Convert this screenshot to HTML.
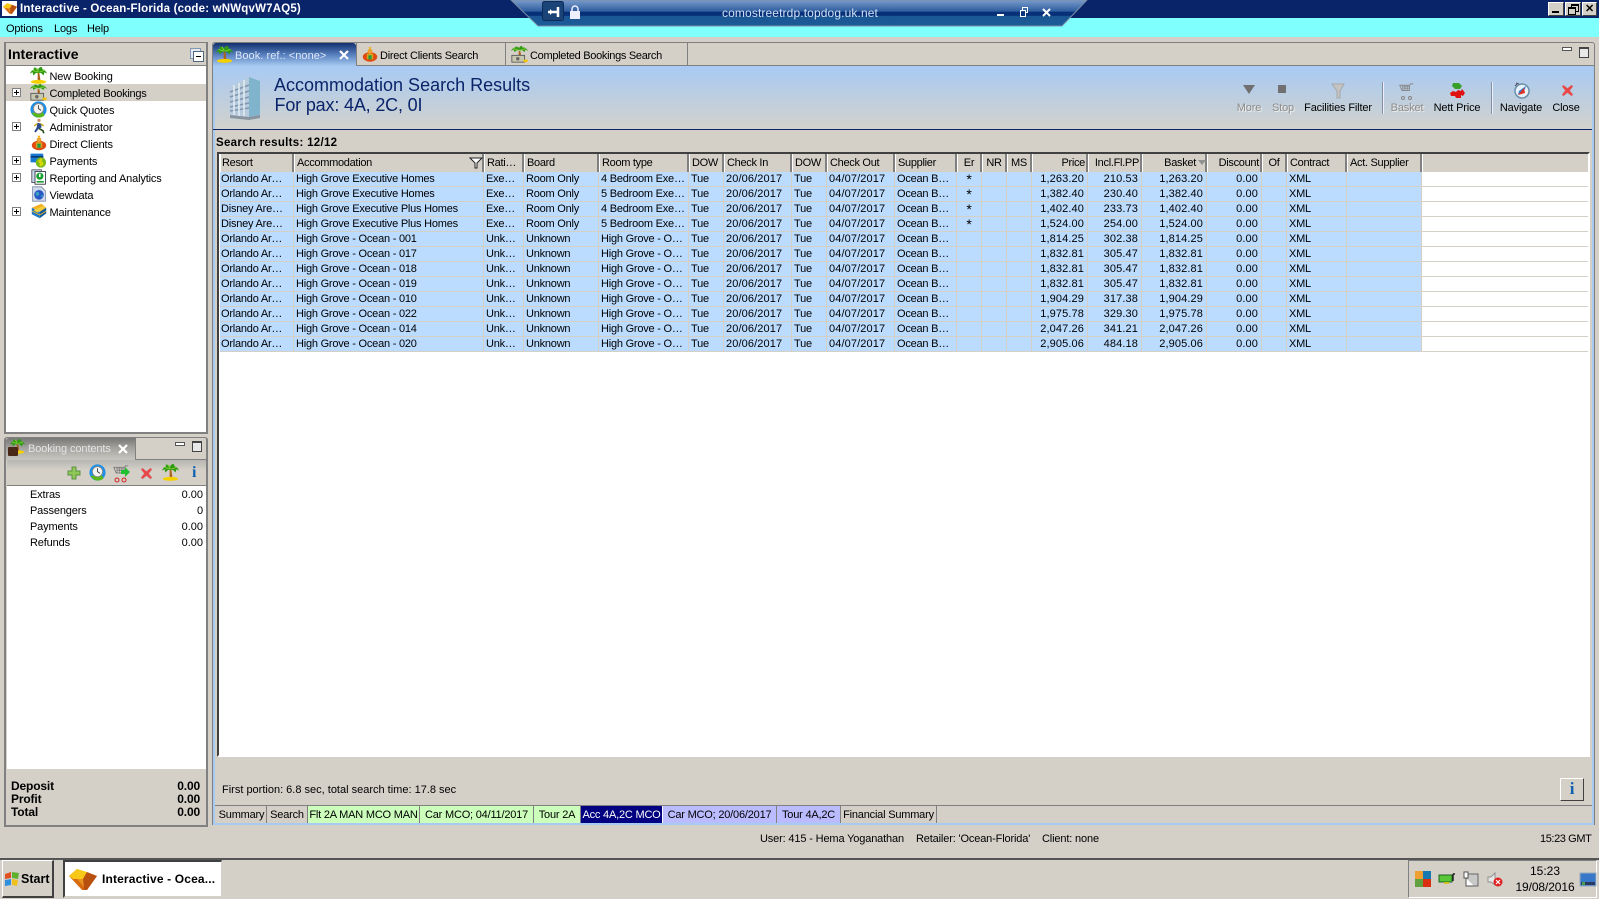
<!DOCTYPE html>
<html><head><meta charset="utf-8"><title>Interactive</title>
<style>
html,body{margin:0;padding:0}
body{width:1599px;height:899px;position:relative;overflow:hidden;background:#d4d0c8;font:11px "Liberation Sans",Arial,sans-serif;color:#000;letter-spacing:-.15px}
.a{position:absolute;white-space:nowrap}
.t{position:absolute;white-space:nowrap;line-height:14px}
svg{position:absolute;overflow:visible}
#grid{position:absolute;left:220px;top:154px;border-collapse:separate;border-spacing:0;table-layout:fixed;width:1368px}
#grid th{height:18px;padding:1px 0 0 2px;font-weight:normal;text-align:left;background:#d4d0c8;border-right:2px solid #808080;border-left:1px solid #fff;box-sizing:border-box;overflow:hidden;white-space:nowrap;line-height:15px;letter-spacing:-.3px}
#grid th:first-child{padding-left:1px}
#grid th:last-child{border-right:0}
#grid td{height:15px;padding:0 0 0 2px;box-sizing:border-box;background:#bbdcff;border-right:1px solid #d4d0c8;border-bottom:1px solid #d4d0c8;overflow:hidden;white-space:nowrap;line-height:14px;letter-spacing:-.22px}
#grid td:first-child{padding-left:1px}
#grid td:last-child{background:#fff;border-right:0}
#grid td:nth-child(7),#grid td:nth-child(9),#grid td:nth-child(n+14):nth-child(-n+17){letter-spacing:.12px}
#grid th:nth-child(n+14):nth-child(-n+17),#grid td:nth-child(n+14):nth-child(-n+17){text-align:right;padding-right:3px;padding-left:0}
#grid th:nth-child(n+14):nth-child(-n+17){padding-right:1px}
#grid th:nth-child(16){padding-right:9px !important}
#grid th:nth-child(n+11):nth-child(-n+13),#grid td:nth-child(n+11):nth-child(-n+13),#grid th:nth-child(18){text-align:center;padding-left:0;padding-right:0}
#grid td:nth-child(11){font-size:14px;line-height:14px}
.tree{position:absolute;left:49.500px;line-height:17px;height:17px}
.exp{position:absolute;left:12px;width:7px;height:7px;border:1px solid #808080;background:#fff}
.exp:before{content:"";position:absolute;left:1px;top:3px;width:5px;height:1px;background:#000}
.exp:after{content:"";position:absolute;left:3px;top:1px;width:1px;height:5px;background:#000}
.btab{position:absolute;top:806px;height:17px;line-height:18px;text-align:center;border-right:1px solid #808080;box-sizing:border-box;white-space:nowrap;overflow:hidden;letter-spacing:-.2px}
.tb{position:absolute;top:101px;line-height:14px;text-align:center;transform:translateX(-50%);white-space:nowrap}
.dis{color:#8c8c8c;text-shadow:1px 1px 0 #eee}
.wb{position:absolute;top:2px;width:16px;height:14px;background:#d4d0c8;border:1px solid;border-color:#fff #404040 #404040 #fff;box-sizing:border-box}
</style></head><body>
<svg width="0" height="0" style="position:absolute"><defs>
<symbol id="palm" viewBox="0 0 20 20"><path d="M9 7l2 0 1.500 10-3.500 0z" fill="#a8621a"/><path d="M10 7C7 1 2 2 0 8l3-2 1 4 3-3zM10 7c3-6 8-5 10 1l-3-2-1 4-3-3zM10 7C9 2 10 0 14 0l1 4zM10 7C10 2 8 0 4 1l2 4z" fill="#2f9a12"/><path d="M3 4l6 2M17 4l-6 2M7 1l3 5" stroke="#8ad838" fill="none"/><ellipse cx="10" cy="17.500" rx="9" ry="2.300" fill="#f4d000"/></symbol>
<symbol id="palmcash" viewBox="0 0 20 20"><path d="M9 6l2 0 1 6-3 0z" fill="#a8621a"/><path d="M10 5C7 0 2 1 0 6l3-2 1 3 3-2zM10 5c3-5 8-4 10 1l-3-2-1 3-3-2zM10 5C9 2 10 0 13 0l1 3zM10 5C10 2 8 0 5 1l1 3z" fill="#2f9a12"/><path d="M3 3l6 2M17 3l-6 2" stroke="#8ad838" fill="none"/><rect x="1" y="11" width="15" height="8" fill="#c8c8b0" stroke="#555"/><circle cx="8" cy="15" r="2" fill="#666"/><path d="M15 16l5 0-1 3-4 0z" fill="#f4c000"/></symbol>
<symbol id="clock" viewBox="0 0 20 20"><circle cx="10" cy="10" r="9.500" fill="#1e90e8"/><path d="M2 14a9.500 9.500 0 0 0 15 3l-2-4z" fill="#58b818"/><circle cx="10" cy="9" r="6" fill="#f4f4f4" stroke="#888"/><path d="M10 5v4l3 2" stroke="#333" fill="none"/></symbol>
<symbol id="run" viewBox="0 0 20 20"><circle cx="10" cy="3" r="2" fill="#c89060"/><path d="M8 6l5 1 0 5-3 1-4 5-2-1 3-5z" fill="#2a4a90"/><path d="M10 13l5 3 1 3" stroke="#284a18" stroke-width="2" fill="none"/><path d="M12 7l4 3M8 7l-4 3" stroke="#c8a000" stroke-width="1.500"/></symbol>
<symbol id="client" viewBox="0 0 20 20"><ellipse cx="10" cy="13" rx="9" ry="6" fill="#e04a10"/><rect x="6" y="9" width="8" height="7" fill="#d8a020"/><rect x="8" y="11" width="4" height="5" fill="#18a040"/><circle cx="10" cy="6" r="3" fill="#f0a030"/><path d="M8 1h4l-2 3" fill="#f0b000"/></symbol>
<symbol id="pay" viewBox="0 0 20 20"><rect x="0" y="2" width="16" height="11" rx="1" fill="#1878d0"/><rect x="0" y="5" width="16" height="2" fill="#083878"/><circle cx="13" cy="13" r="6.500" fill="#78b818"/><path d="M15 10h-3a1.500 1.500 0 0 0 0 3h2a1.500 1.500 0 0 1 0 3h-3M13 8v10" stroke="#f4e000" stroke-width="1.300" fill="none"/></symbol>
<symbol id="rep" viewBox="0 0 20 20"><rect x="1" y="1" width="12" height="16" fill="#c8d8e8" stroke="#445"/><rect x="5" y="3" width="13" height="16" fill="#fff" stroke="#223"/><circle cx="11" cy="9" r="4.500" fill="#18a030"/><rect x="10" y="6" width="2" height="4" fill="#fff"/><rect x="7" y="15" width="9" height="2" fill="#18a030"/></symbol>
<symbol id="view" viewBox="0 0 20 20"><path d="M2 1h11l5 5v13H2z" fill="#d0d8ec" stroke="#7888a8"/><circle cx="10" cy="11" r="6" fill="#2858c8"/><path d="M6 8c3-2 5 1 4 3s-3 2-4 0zM12 12l3-1-1 4z" fill="#38a0c0"/></symbol>
<symbol id="maint" viewBox="0 0 20 20"><path d="M1 6l12-5 6 5-6 5z" fill="#f4b020"/><path d="M1 6v8l10 5V11z" fill="#1878c8"/><path d="M11 11v8l8-6V6z" fill="#0d5aa0"/><path d="M3 9l12-5 3 2-10 6z" fill="#f0d040"/><path d="M1 10l10 5 8-5" stroke="#f4b020" fill="none"/></symbol>
<symbol id="logo" viewBox="0 0 28 21"><path d="M0 7L8 0l20 7-10 14h-5z" fill="#d86a10"/><path d="M0 7L8 0l10 3-4 7H4z" fill="#f8c818"/><path d="M14 10l4-7 10 4-10 14h-3z" fill="#b85010"/><path d="M8 10h6l1 8z" fill="#e89020"/></symbol>
<symbol id="cross" viewBox="0 0 16 16"><path d="M3 1l5 4 5-4 2 2-4 5 4 5-2 2-5-4-5 4-2-2 4-5-4-5z" fill="#e84848" stroke="#c0c0c8" stroke-width=".6"/></symbol>
<symbol id="cart" viewBox="0 0 20 20"><path d="M1 3h13v7H4zM14 3l2-2h3" stroke="currentColor" fill="none" stroke-width="1.200"/><path d="M4 5h10M5 7h9M5 3v7M8 3v7M11 3v7" stroke="currentColor"/><path d="M4 10h10" stroke="currentColor"/></symbol>
</defs></svg>

<!-- Title bar -->
<div class="a" style="left:0;top:0;width:1599px;height:18px;background:#0a246a"></div>
<div class="a" style="left:2px;top:1px;width:15px;height:15px;background:#fff"></div>
<svg style="left:3px;top:3px" width="14" height="11"><use href="#logo" width="14" height="11"/></svg>
<div class="t" style="left:20px;top:2px;color:#fff;font-weight:bold;letter-spacing:.19px;font-size:11.500px">Interactive - Ocean-Florida (code: wNWqvW7AQ5)</div>
<div class="wb" style="left:1548px"><div class="a" style="left:3px;bottom:2px;width:7px;height:2px;background:#000"></div></div>
<div class="wb" style="left:1565px"><div class="a" style="left:5px;top:1px;width:6px;height:5px;border:1px solid #000;border-top-width:2px"></div><div class="a" style="left:2px;top:4px;width:6px;height:5px;border:1px solid #000;border-top-width:2px;background:#d4d0c8"></div></div>
<div class="wb" style="left:1582px;width:15px;font:bold 11px/12px 'Liberation Sans';text-align:center">✕</div>

<!-- Menu -->
<div class="a" style="left:0;top:18px;width:1599px;height:19px;background:#80ffff"></div>
<div class="t" style="left:6px;top:22px">Options</div>
<div class="t" style="left:54px;top:22px">Logs</div>
<div class="t" style="left:87px;top:22px">Help</div>

<!-- RDP bar -->
<svg style="left:0;top:0" width="1599" height="30"><defs><linearGradient id="rdp" x1="0" y1="0" x2="0" y2="1"><stop offset="0" stop-color="#7a9ccc"/><stop offset=".44" stop-color="#2d5c9e"/><stop offset=".46" stop-color="#083078"/><stop offset=".6" stop-color="#083078"/><stop offset=".62" stop-color="#1a5694"/><stop offset="1" stop-color="#1d5a98"/></linearGradient></defs>
<path d="M511 0L538 26H1062L1087 0z" fill="url(#rdp)" stroke="#7c8ea4" stroke-width="1"/>
<rect x="542.500" y="1.500" width="21" height="19" rx="2" fill="#1a4478" stroke="#0c2c58"/>
<path d="M548 12h10M558 7v10" stroke="#fff" stroke-width="2.500" fill="none"/><path d="M550 9l3 3-3 3z" fill="#fff"/>
<rect x="570" y="11" width="10" height="8" fill="#eef"/><path d="M572 11V9a3 3 0 0 1 6 0v2" stroke="#eef" stroke-width="1.500" fill="none"/>
<rect x="997" y="14" width="7" height="2" fill="#fff"/>
<path d="M1020.500 10.500h5v6h-5zM1022.500 10.500v-3h5v5h-2" stroke="#fff" fill="none"/>
<path d="M1043 9l7 7M1050 9l-7 7" stroke="#fff" stroke-width="2"/></svg>
<div class="t" style="left:700px;top:6px;width:200px;text-align:center;color:#cfe0f4;font-size:12px;letter-spacing:.12px">comostreetrdp.topdog.uk.net</div>

<!-- Left tree panel -->
<div class="a" style="left:4px;top:42px;width:200px;height:389px;border:2px solid #808080;border-width:1px 2px 2px 2px;background:#fff"></div>
<div class="a" style="left:6px;top:43px;width:200px;height:22px;background:#d4d0c8;border-bottom:1px solid #808080"></div>
<div class="t" style="left:8px;top:47px;font:bold 14px/14px 'Liberation Sans';letter-spacing:.05px">Interactive</div>
<div class="a" style="left:190px;top:48px;width:9px;height:9px;border:1px solid #8098b0;background:#e4e8f0"></div>
<div class="a" style="left:193px;top:51px;width:9px;height:9px;border:1px solid #506880;background:#fff"><div class="a" style="left:2px;top:4px;width:5px;height:1px;background:#000"></div></div>
<div class="a" style="left:6px;top:84px;width:200px;height:17px;background:#d4d0c8"></div>
<svg style="left:30px;top:67px" width="17" height="17"><use href="#palm" width="17" height="17"/></svg>
<svg style="left:30px;top:84px" width="17" height="17"><use href="#palmcash" width="17" height="17"/></svg>
<svg style="left:30px;top:101px" width="17" height="17"><use href="#clock" width="17" height="17"/></svg>
<svg style="left:31px;top:118px" width="16" height="16"><use href="#run" width="16" height="16"/></svg>
<svg style="left:31px;top:135px" width="16" height="16"><use href="#client" width="16" height="16"/></svg>
<svg style="left:30px;top:152px" width="17" height="16"><use href="#pay" width="17" height="16"/></svg>
<svg style="left:31px;top:169px" width="16" height="16"><use href="#rep" width="16" height="16"/></svg>
<svg style="left:31px;top:186px" width="16" height="16"><use href="#view" width="16" height="16"/></svg>
<svg style="left:31px;top:203px" width="16" height="16"><use href="#maint" width="16" height="16"/></svg>
<div class="tree" style="top:69px">New Booking</div>
<div class="tree" style="top:86px;letter-spacing:-.25px">Completed Bookings</div>
<div class="tree" style="top:103px">Quick Quotes</div>
<div class="tree" style="top:120px">Administrator</div>
<div class="tree" style="top:137px">Direct Clients</div>
<div class="tree" style="top:154px">Payments</div>
<div class="tree" style="top:171px">Reporting and Analytics</div>
<div class="tree" style="top:188px">Viewdata</div>
<div class="tree" style="top:205px">Maintenance</div>
<div class="exp" style="top:88px"></div>
<div class="exp" style="top:122px"></div>
<div class="exp" style="top:156px"></div>
<div class="exp" style="top:173px"></div>
<div class="exp" style="top:207px"></div>

<!-- Booking contents panel -->
<div class="a" style="left:4px;top:437px;width:200px;height:387px;border:2px solid #808080;border-radius:3px 3px 0 0;border-width:1px 2px 2px 2px;background:#d4d0c8"></div>
<div class="a" style="left:6px;top:438px;width:129px;height:22px;background:linear-gradient(#777,#a8a6a2 50%,#c8c6c0);border-radius:3px 0 0 0"></div>
<div class="a" style="left:135px;top:438px;width:1px;height:22px;background:#808080"></div>
<div class="a" style="left:135px;top:459px;width:71px;height:1px;background:#808080"></div>
<svg style="left:8px;top:439px" width="17" height="18"><use href="#palm" x="2" width="15" height="15"/><rect x="0" y="8" width="10" height="9" rx="1" fill="#4a2818"/></svg>
<div class="t" style="left:28px;top:442px;color:#e4e4e4;letter-spacing:-.1px">Booking contents</div>
<svg style="left:118px;top:444px" width="10" height="10"><path d="M1 1l8 8M9 1l-8 8" stroke="#fff" stroke-width="2.200"/></svg>
<div class="a" style="left:175px;top:442px;width:8px;height:2px;border:1px solid #555;background:#fff"></div>
<div class="a" style="left:192px;top:441px;width:8px;height:8px;border:1px solid #444;border-top-width:2px;background:#e8e8e8"></div>
<div class="a" style="left:7px;top:460px;width:199px;height:25px;background:linear-gradient(#b8b6b2,#d4d0c8 40%)"></div>
<div class="a" style="left:7px;top:485px;width:199px;height:1px;background:#808080"></div>
<div class="a" style="left:7px;top:486px;width:199px;height:283px;background:#fff"></div>
<svg style="left:67px;top:466px" width="14" height="14"><path d="M5 1h4v4h4v4H9v4H5V9H1V5h4z" fill="#90c858" stroke="#5a9040"/></svg>
<svg style="left:89px;top:464px" width="17" height="17"><use href="#clock" width="17" height="17"/></svg>
<svg style="left:113px;top:465px;color:#808080" width="18" height="18"><use href="#cart" width="16" height="16"/><circle cx="4" cy="15" r="2" fill="none" stroke="#d02020"/><circle cx="11" cy="15" r="2" fill="none" stroke="#d02020"/><path d="M8 5h4V2l5 5-5 5V9H8z" fill="#20c030"/></svg>
<svg style="left:140px;top:467px" width="13" height="13"><use href="#cross" width="13" height="13"/></svg>
<svg style="left:162px;top:464px" width="17" height="17"><use href="#palm" width="17" height="17"/></svg>
<div class="t" style="left:192px;top:465px;font:bold 16px/16px 'Liberation Serif';color:#1060b0">i</div>
<div class="t" style="left:30px;top:488px">Extras</div><div class="t" style="left:150px;width:53px;top:488px;text-align:right;letter-spacing:0">0.00</div>
<div class="t" style="left:30px;top:504px">Passengers</div><div class="t" style="left:150px;width:53px;top:504px;text-align:right">0</div>
<div class="t" style="left:30px;top:520px">Payments</div><div class="t" style="left:150px;width:53px;top:520px;text-align:right;letter-spacing:0">0.00</div>
<div class="t" style="left:30px;top:536px">Refunds</div><div class="t" style="left:150px;width:53px;top:536px;text-align:right;letter-spacing:0">0.00</div>
<div class="t" style="left:11px;top:779px;font-weight:bold;font-size:12px">Deposit</div><div class="t" style="left:140px;width:60px;top:779px;text-align:right;font-weight:bold;font-size:12px">0.00</div>
<div class="t" style="left:11px;top:792px;font-weight:bold;font-size:12px">Profit</div><div class="t" style="left:140px;width:60px;top:792px;text-align:right;font-weight:bold;font-size:12px">0.00</div>
<div class="t" style="left:11px;top:805px;font-weight:bold;font-size:12px">Total</div><div class="t" style="left:140px;width:60px;top:805px;text-align:right;font-weight:bold;font-size:12px">0.00</div>

<!-- Main panel -->
<div class="a" style="left:212px;top:42px;width:1383px;height:783px;border:1px solid #808080;border-radius:3px 3px 0 0;box-sizing:border-box"></div>
<div class="a" style="left:213px;top:65px;width:1381px;height:760px;border:2px solid #a6caf0;border-top:0;box-sizing:border-box"></div>
<div class="a" style="left:213px;top:65px;width:1381px;height:1px;background:#808080"></div>
<div class="a" style="left:215px;top:66px;width:1377px;height:63px;background:linear-gradient(#a8caf4,#d2d2cc)"></div>
<div class="a" style="left:213px;top:129px;width:1379px;height:1px;background:#0a246a"></div>
<!-- tabs -->
<div class="a" style="left:213px;top:43px;width:143px;height:23px;background:linear-gradient(#12306e,#5e86c4 55%,#a6caf0);border-radius:3px 3px 0 0"></div>
<svg style="left:216px;top:46px" width="17" height="17"><use href="#palm" width="17" height="17"/></svg>
<div class="t" style="left:235px;top:49px;color:#dfe8f6;letter-spacing:.05px">Book. ref.: &lt;none&gt;</div>
<svg style="left:339px;top:50px" width="10" height="10"><path d="M1 1l8 8M9 1l-8 8" stroke="#fff" stroke-width="2.200"/></svg>
<div class="a" style="left:356px;top:43px;width:1px;height:22px;background:#808080"></div>
<svg style="left:362px;top:46px" width="16" height="17"><use href="#client" width="16" height="17"/></svg>
<div class="t" style="left:380px;top:49px;letter-spacing:-.25px">Direct Clients Search</div>
<div class="a" style="left:505px;top:43px;width:1px;height:22px;background:#808080"></div>
<svg style="left:511px;top:46px" width="17" height="17"><use href="#palmcash" width="17" height="17"/></svg>
<div class="t" style="left:530px;top:49px;letter-spacing:-.3px">Completed Bookings Search</div>
<div class="a" style="left:687px;top:43px;width:1px;height:22px;background:#808080"></div>
<div class="a" style="left:1562px;top:47px;width:8px;height:2px;border:1px solid #555;background:#fff"></div>
<div class="a" style="left:1579px;top:47px;width:8px;height:8px;border:1px solid #444;border-top-width:2px;background:#e8e8e8"></div>
<!-- banner -->
<svg style="left:227px;top:75px" width="36" height="46"><path d="M3 12L22 2v40L3 40z" fill="#b8cbdc"/><path d="M22 2l11 4v34l-11 2z" fill="#7fb4cc"/><path d="M3 17l19-7M3 22l19-6M3 27l19-5M3 32l19-4M3 36l19-3" stroke="#7f96b0" stroke-width="1.500" fill="none"/><path d="M7 10v30M12 8v33M17 5v36" stroke="#e4eef4" stroke-width="1.500"/><path d="M3 40l19 2 11-2v3l-11 2-19-2z" fill="#8a94a0"/></svg>
<div class="t" style="left:274px;top:75px;font:18px/20px 'Liberation Sans';color:#0a246a;letter-spacing:0">Accommodation Search Results</div>
<div class="t" style="left:274.500px;top:95px;font:18px/20px 'Liberation Sans';color:#0a246a;letter-spacing:-.17px">For pax: 4A, 2C, 0I</div>
<svg style="left:1243px;top:85px" width="13" height="10"><path d="M0 0h12l-6 9z" fill="#707070"/></svg>
<div class="a" style="left:1278px;top:85px;width:8px;height:8px;background:#707070"></div>
<svg style="left:1332px;top:83px" width="13" height="16"><path d="M0 1h12L8 8v7H5V8z" fill="#c4c4c4" stroke="#a8a8a8"/></svg>
<svg style="left:1399px;top:83px;color:#888" width="16" height="17"><use href="#cart" width="15" height="15"/><circle cx="4" cy="15" r="1.500" fill="none" stroke="#888"/><circle cx="11" cy="15" r="1.500" fill="none" stroke="#888"/></svg>
<svg style="left:1450px;top:83px" width="16" height="16"><path d="M3 0h6l3 3-2 3H5L2 3z" fill="#38a028"/><path d="M0 10l3-2 3 1 2-2 3 1 1-2 3 4-2 3-2-1v3H6l-1-2H1z" fill="#e01010"/></svg>
<svg style="left:1514px;top:82px" width="16" height="18"><circle cx="8" cy="9" r="7" fill="#e8f0f8" stroke="#6890a8" stroke-width="1.500"/><path d="M4 13L11 7l1-3-7 5z" fill="#3078c8"/><path d="M4 13l6-7 1 5z" fill="#e03020"/><path d="M5 2l-3-1M3 2L1 4" stroke="#556"/></svg>
<svg style="left:1561px;top:84px" width="13" height="13"><use href="#cross" width="13" height="13"/></svg>
<div class="a" style="left:1382px;top:82px;width:1px;height:32px;background:#8090a0"></div><div class="a" style="left:1383px;top:82px;width:1px;height:32px;background:#eef"></div>
<div class="a" style="left:1491px;top:82px;width:1px;height:32px;background:#8090a0"></div><div class="a" style="left:1492px;top:82px;width:1px;height:32px;background:#eef"></div>
<div class="tb dis" style="left:1249px">More</div>
<div class="tb dis" style="left:1283px">Stop</div>
<div class="tb" style="left:1338px">Facilities Filter</div>
<div class="tb dis" style="left:1407px">Basket</div>
<div class="tb" style="left:1457px">Nett Price</div>
<div class="tb" style="left:1521px">Navigate</div>
<div class="tb" style="left:1566px">Close</div>
<div class="t" style="left:216px;top:136px;font-weight:bold;letter-spacing:.3px;font-size:11.500px">Search results: 12/12</div>

<!-- Grid -->
<div class="a" style="left:217px;top:152px;width:1373px;height:605px;background:#fff;box-sizing:border-box;border:solid;border-width:2px 2px 2px 2px;border-color:#404040 #fff #fff #404040;outline:1px solid #d4d0c8"></div>
<table id="grid">
<colgroup><col style="width:74px"><col style="width:190px"><col style="width:40px"><col style="width:75px"><col style="width:90px"><col style="width:35px"><col style="width:68px"><col style="width:35px"><col style="width:68px"><col style="width:62px"><col style="width:25px"><col style="width:25px"><col style="width:25px"><col style="width:56px"><col style="width:54px"><col style="width:65px"><col style="width:55px"><col style="width:25px"><col style="width:60px"><col style="width:75px"><col style="width:166px"></colgroup>
<tr><th>Resort</th><th>Accommodation</th><th>Rati…</th><th>Board</th><th>Room type</th><th>DOW</th><th>Check In</th><th>DOW</th><th>Check Out</th><th>Supplier</th><th>Er</th><th>NR</th><th>MS</th><th>Price</th><th>Incl.Fl.PP</th><th>Basket</th><th>Discount</th><th>Of</th><th>Contract</th><th>Act. Supplier</th><th></th></tr>
<tr><td>Orlando Ar…</td><td>High Grove Executive Homes</td><td>Exe…</td><td>Room Only</td><td>4 Bedroom Exe…</td><td>Tue</td><td>20/06/2017</td><td>Tue</td><td>04/07/2017</td><td>Ocean B…</td><td>*</td><td></td><td></td><td>1,263.20</td><td>210.53</td><td>1,263.20</td><td>0.00</td><td></td><td>XML</td><td></td><td></td></tr>
<tr><td>Orlando Ar…</td><td>High Grove Executive Homes</td><td>Exe…</td><td>Room Only</td><td>5 Bedroom Exe…</td><td>Tue</td><td>20/06/2017</td><td>Tue</td><td>04/07/2017</td><td>Ocean B…</td><td>*</td><td></td><td></td><td>1,382.40</td><td>230.40</td><td>1,382.40</td><td>0.00</td><td></td><td>XML</td><td></td><td></td></tr>
<tr><td>Disney Are…</td><td>High Grove Executive Plus Homes</td><td>Exe…</td><td>Room Only</td><td>4 Bedroom Exe…</td><td>Tue</td><td>20/06/2017</td><td>Tue</td><td>04/07/2017</td><td>Ocean B…</td><td>*</td><td></td><td></td><td>1,402.40</td><td>233.73</td><td>1,402.40</td><td>0.00</td><td></td><td>XML</td><td></td><td></td></tr>
<tr><td>Disney Are…</td><td>High Grove Executive Plus Homes</td><td>Exe…</td><td>Room Only</td><td>5 Bedroom Exe…</td><td>Tue</td><td>20/06/2017</td><td>Tue</td><td>04/07/2017</td><td>Ocean B…</td><td>*</td><td></td><td></td><td>1,524.00</td><td>254.00</td><td>1,524.00</td><td>0.00</td><td></td><td>XML</td><td></td><td></td></tr>
<tr><td>Orlando Ar…</td><td>High Grove - Ocean - 001</td><td>Unk…</td><td>Unknown</td><td>High Grove - O…</td><td>Tue</td><td>20/06/2017</td><td>Tue</td><td>04/07/2017</td><td>Ocean B…</td><td></td><td></td><td></td><td>1,814.25</td><td>302.38</td><td>1,814.25</td><td>0.00</td><td></td><td>XML</td><td></td><td></td></tr>
<tr><td>Orlando Ar…</td><td>High Grove - Ocean - 017</td><td>Unk…</td><td>Unknown</td><td>High Grove - O…</td><td>Tue</td><td>20/06/2017</td><td>Tue</td><td>04/07/2017</td><td>Ocean B…</td><td></td><td></td><td></td><td>1,832.81</td><td>305.47</td><td>1,832.81</td><td>0.00</td><td></td><td>XML</td><td></td><td></td></tr>
<tr><td>Orlando Ar…</td><td>High Grove - Ocean - 018</td><td>Unk…</td><td>Unknown</td><td>High Grove - O…</td><td>Tue</td><td>20/06/2017</td><td>Tue</td><td>04/07/2017</td><td>Ocean B…</td><td></td><td></td><td></td><td>1,832.81</td><td>305.47</td><td>1,832.81</td><td>0.00</td><td></td><td>XML</td><td></td><td></td></tr>
<tr><td>Orlando Ar…</td><td>High Grove - Ocean - 019</td><td>Unk…</td><td>Unknown</td><td>High Grove - O…</td><td>Tue</td><td>20/06/2017</td><td>Tue</td><td>04/07/2017</td><td>Ocean B…</td><td></td><td></td><td></td><td>1,832.81</td><td>305.47</td><td>1,832.81</td><td>0.00</td><td></td><td>XML</td><td></td><td></td></tr>
<tr><td>Orlando Ar…</td><td>High Grove - Ocean - 010</td><td>Unk…</td><td>Unknown</td><td>High Grove - O…</td><td>Tue</td><td>20/06/2017</td><td>Tue</td><td>04/07/2017</td><td>Ocean B…</td><td></td><td></td><td></td><td>1,904.29</td><td>317.38</td><td>1,904.29</td><td>0.00</td><td></td><td>XML</td><td></td><td></td></tr>
<tr><td>Orlando Ar…</td><td>High Grove - Ocean - 022</td><td>Unk…</td><td>Unknown</td><td>High Grove - O…</td><td>Tue</td><td>20/06/2017</td><td>Tue</td><td>04/07/2017</td><td>Ocean B…</td><td></td><td></td><td></td><td>1,975.78</td><td>329.30</td><td>1,975.78</td><td>0.00</td><td></td><td>XML</td><td></td><td></td></tr>
<tr><td>Orlando Ar…</td><td>High Grove - Ocean - 014</td><td>Unk…</td><td>Unknown</td><td>High Grove - O…</td><td>Tue</td><td>20/06/2017</td><td>Tue</td><td>04/07/2017</td><td>Ocean B…</td><td></td><td></td><td></td><td>2,047.26</td><td>341.21</td><td>2,047.26</td><td>0.00</td><td></td><td>XML</td><td></td><td></td></tr>
<tr><td>Orlando Ar…</td><td>High Grove - Ocean - 020</td><td>Unk…</td><td>Unknown</td><td>High Grove - O…</td><td>Tue</td><td>20/06/2017</td><td>Tue</td><td>04/07/2017</td><td>Ocean B…</td><td></td><td></td><td></td><td>2,905.06</td><td>484.18</td><td>2,905.06</td><td>0.00</td><td></td><td>XML</td><td></td><td></td></tr>
</table>
<svg style="left:469px;top:157px" width="14" height="12"><path d="M1 1h12L8 6v5H6V6z" fill="#fff" stroke="#222"/></svg>
<svg style="left:1198px;top:160px" width="9" height="6"><path d="M0 0h8L4 5z" fill="#909090"/></svg>

<!-- Bottom of main -->
<div class="t" style="left:222px;top:783px;letter-spacing:0">First portion: 6.8 sec, total search time: 17.8 sec</div>
<div class="a" style="left:1560px;top:778px;width:24px;height:23px;box-sizing:border-box;background:#d4d0c8;border:1px solid;border-color:#fff #404040 #404040 #fff;text-align:center;font:bold 17px/20px 'Liberation Serif';color:#1060b0">i</div>
<div class="a" style="left:215px;top:805px;width:1377px;height:1px;background:#808080"></div>
<div class="btab" style="left:217px;width:50px">Summary</div>
<div class="btab" style="left:267px;width:41px">Search</div>
<div class="btab" style="left:308px;width:112px;background:#ccffbb">Flt 2A MAN MCO MAN</div>
<div class="btab" style="left:420px;width:114px;background:#ccffbb">Car MCO; 04/11/2017</div>
<div class="btab" style="left:534px;width:47px;background:#ccffbb">Tour 2A</div>
<div class="btab" style="left:581px;width:82px;background:#000080;color:#fff;border-right:1px solid #fff">Acc 4A,2C MCO</div>
<div class="btab" style="left:663px;width:114px;background:#bbbbff">Car MCO; 20/06/2017</div>
<div class="btab" style="left:777px;width:64px;background:#bbbbff">Tour 4A,2C</div>
<div class="btab" style="left:841px;width:96px">Financial Summary</div>

<!-- Status -->
<div class="t" style="left:760px;top:832px">User: 415 - Hema Yoganathan</div>
<div class="t" style="left:916px;top:832px">Retailer: 'Ocean-Florida'</div>
<div class="t" style="left:1042px;top:832px">Client: none</div>
<div class="t" style="left:1540px;top:832px;letter-spacing:-.4px">15:23 GMT</div>

<!-- Taskbar -->
<div class="a" style="left:0;top:858px;width:1599px;height:2px;background:#555"></div>
<div class="a" style="left:2px;top:860px;width:52px;height:38px;box-sizing:border-box;border:1px solid;border-color:#fff #404040 #404040 #fff;border-right-width:2px;border-bottom-width:2px"></div>
<svg style="left:4px;top:871px" width="16" height="16"><path d="M1 3l6-2 0 6-6 1z" fill="#e05020"/><path d="M8 1l7 1-1 6-6-1z" fill="#60b030"/><path d="M1 9l6-1v6l-6 1z" fill="#3090e0"/><path d="M8 8l6 1-1 6-5-1z" fill="#f0c020"/></svg>
<div class="t" style="left:21px;top:872px;font-weight:bold;font-size:12.500px;letter-spacing:0">Start</div>
<div class="a" style="left:63px;top:860px;width:159px;height:38px;box-sizing:border-box;background:#fff;border:2px solid;border-color:#404040 #d4d0c8 #d4d0c8 #404040;border-width:2px 1px 2px 2px"></div>
<svg style="left:69px;top:869px" width="28" height="21"><use href="#logo" width="28" height="21"/></svg>
<div class="t" style="left:102px;top:872px;font-weight:bold;font-size:12px;letter-spacing:.15px">Interactive - Ocea...</div>
<div class="a" style="left:1408px;top:860px;width:189px;height:38px;box-sizing:border-box;border:1px solid;border-color:#808080 #fff #fff #808080"></div>
<svg style="left:1415px;top:871px" width="16" height="16"><rect x="0" y="0" width="8" height="8" fill="#f0a030"/><rect x="8" y="0" width="8" height="8" fill="#1878b0"/><rect x="0" y="8" width="8" height="8" fill="#60a040"/><rect x="8" y="8" width="8" height="8" fill="#d83010"/></svg>
<svg style="left:1439px;top:873px" width="16" height="12"><rect x="0" y="2" width="13" height="7" fill="#58c838" stroke="#206020"/><rect x="5" y="9" width="5" height="2" fill="#d0c020"/><path d="M14 1h2M14 1v7" stroke="#222" stroke-width="1.500"/></svg>
<svg style="left:1463px;top:871px" width="16" height="16"><rect x="4" y="3" width="11" height="12" fill="#c8c8c8" stroke="#666"/><path d="M1 1h4v6H1zM3 7v8h8" fill="#fff" stroke="#555"/></svg>
<svg style="left:1487px;top:872px" width="17" height="15"><path d="M1 5h3l4-4v12l-4-3H1z" fill="#e8e8e8" stroke="#909090"/><circle cx="11" cy="10" r="4.500" fill="#e02020"/><path d="M9 8l4 4M13 8l-4 4" stroke="#fff" stroke-width="1.200"/></svg>
<div class="t" style="left:1517px;top:864px;width:56px;text-align:center;font-size:12px;letter-spacing:0">15:23</div>
<div class="t" style="left:1515px;top:880px;width:60px;text-align:center;font-size:12px;letter-spacing:-.1px">19/08/2016</div>
<svg style="left:1580px;top:873px" width="16" height="13"><rect x="0" y="0" width="16" height="13" fill="#3878c8" stroke="#9ab"/><rect x="1" y="9" width="14" height="3" fill="#2a3a60"/><rect x="2" y="9" width="3" height="3" fill="#4aa050"/></svg>
</body></html>
